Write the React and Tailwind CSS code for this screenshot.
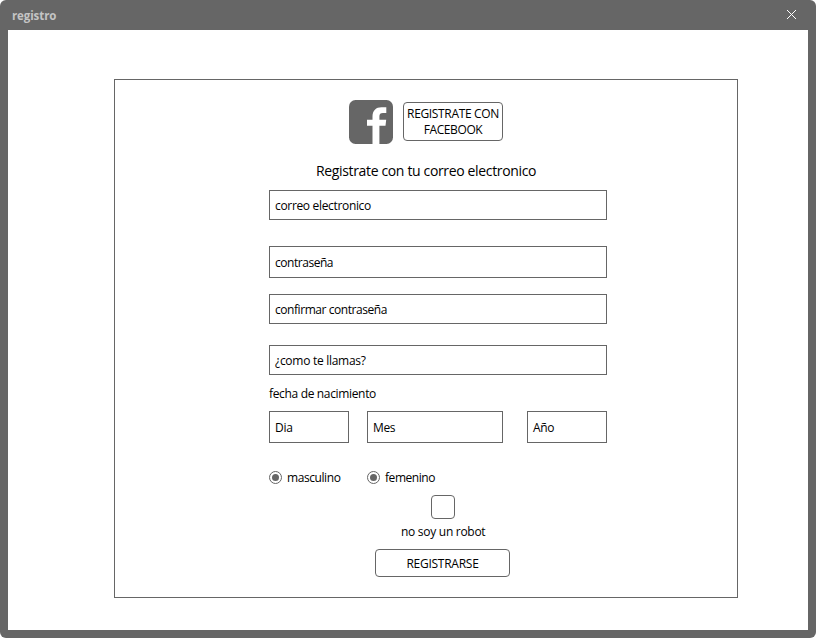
function Field({ label, className, text }) {
  return (
    <div className={`flex items-center border border-[#666] bg-white pt-[2px] pl-[5px] ${className}`}>
      <span className={text}>{label}</span>
    </div>
  );
}

function Radio({ label, className, text }) {
  return (
    <div className={`flex h-[16px] items-center gap-[5px] ${className}`}>
      <span className="-mt-px flex size-[13px] items-center justify-center rounded-full border border-[#666]">
        <span className="size-[7px] rounded-full bg-[#666]" />
      </span>
      <span className={text}>{label}</span>
    </div>
  );
}

function FacebookLogo() {
  return (
    <svg className="size-[44px]" viewBox="0 0 44 44">
      <rect width="44" height="44" rx="6.500" fill="#666" />
      <path
        d="M23.500 44V25.800H18v-6h5.500V16.500C23.500 10.500 27 7.200 32.500 7.200H37.300v5.800h-3.300c-2.700 0-3.600 1.200-3.600 3.400v3.400h6.800L36.500 25.800H30.400v18.200z"
        fill="#fff"
      />
    </svg>
  );
}

export default function App() {
  return (
    <div className="h-[638px] w-[816px] overflow-hidden bg-white font-['Open_Sans','Noto_Sans',sans-serif] text-[12px] leading-[16px] whitespace-nowrap text-black">
      <div className="h-full rounded-[6px] bg-[#666] px-[8px] pb-[8px]">
        <header className="flex h-[30px] items-center justify-between pr-[11px] pl-[4px]">
          <span className="mt-[2px] text-[11.5px] font-bold tracking-[-0.1px] text-[#c4c4c4]">registro</span>
          <svg className="-mt-px size-[11px]" viewBox="0 0 11 11" stroke="#fff" strokeWidth="1" fill="none">
            <path d="M1 1l9 9M10 1l-9 9" />
          </svg>
        </header>
        <main className="h-[600px] bg-white pt-[49px] pl-[106px]">
          <section className="h-[519px] w-[624px] border border-[#666] pt-[20px] pl-[154px]">
            <div className="flex h-[44px] gap-[10px] pl-[80px]">
              <FacebookLogo />
              <button className="mt-[2px] flex h-[39px] w-[100px] flex-col items-center justify-center rounded-[4px] border border-[#666]">
                <span className="tracking-[-0.35px]">REGISTRATE CON</span>
                <span className="tracking-[-0.4px]">FACEBOOK</span>
              </button>
            </div>
            <h1 className="mt-[17px] h-[20px] pl-[47px] text-[14px] leading-[20px] tracking-[-0.35px]">
              Registrate con tu correo electronico
            </h1>
            <Field label="correo electronico" className="mt-[9px] h-[30px] w-[338px]" text="tracking-[-0.33px]" />
            <Field label="contraseña" className="mt-[26px] h-[32px] w-[338px]" text="tracking-[-0.46px]" />
            <Field label="confirmar contraseña" className="mt-[16px] h-[30px] w-[338px]" text="tracking-[-0.44px]" />
            <Field label="¿como te llamas?" className="mt-[21px] h-[30px] w-[338px]" text="tracking-[-0.28px]" />
            <p className="mt-[11px] h-[16px] tracking-[-0.34px]">fecha de nacimiento</p>
            <div className="mt-[9px] flex h-[32px]">
              <Field label="Dia" className="w-[80px]" text="tracking-[-0.3px]" />
              <Field label="Mes" className="ml-[18px] w-[136px]" text="tracking-[-0.35px]" />
              <Field label="Año" className="ml-[24px] w-[80px]" text="tracking-[-0.3px]" />
            </div>
            <div className="mt-[27px] flex">
              <Radio label="masculino" className="w-[98px]" text="tracking-[-0.42px]" />
              <Radio label="femenino" className="" text="tracking-[-0.45px]" />
            </div>
            <div className="mt-[9px] ml-[162px] size-[24px] rounded-[4px] border border-[#666]" />
            <p className="mt-[5px] h-[16px] pl-[132px] tracking-[-0.28px]">no soy un robot</p>
            <button className="mt-[9px] ml-[106px] flex h-[28px] w-[135px] items-center justify-center rounded-[4px] border border-[#666] pt-[2px]">
              <span className="tracking-[-0.25px]">REGISTRARSE</span>
            </button>
          </section>
        </main>
      </div>
    </div>
  );
}
